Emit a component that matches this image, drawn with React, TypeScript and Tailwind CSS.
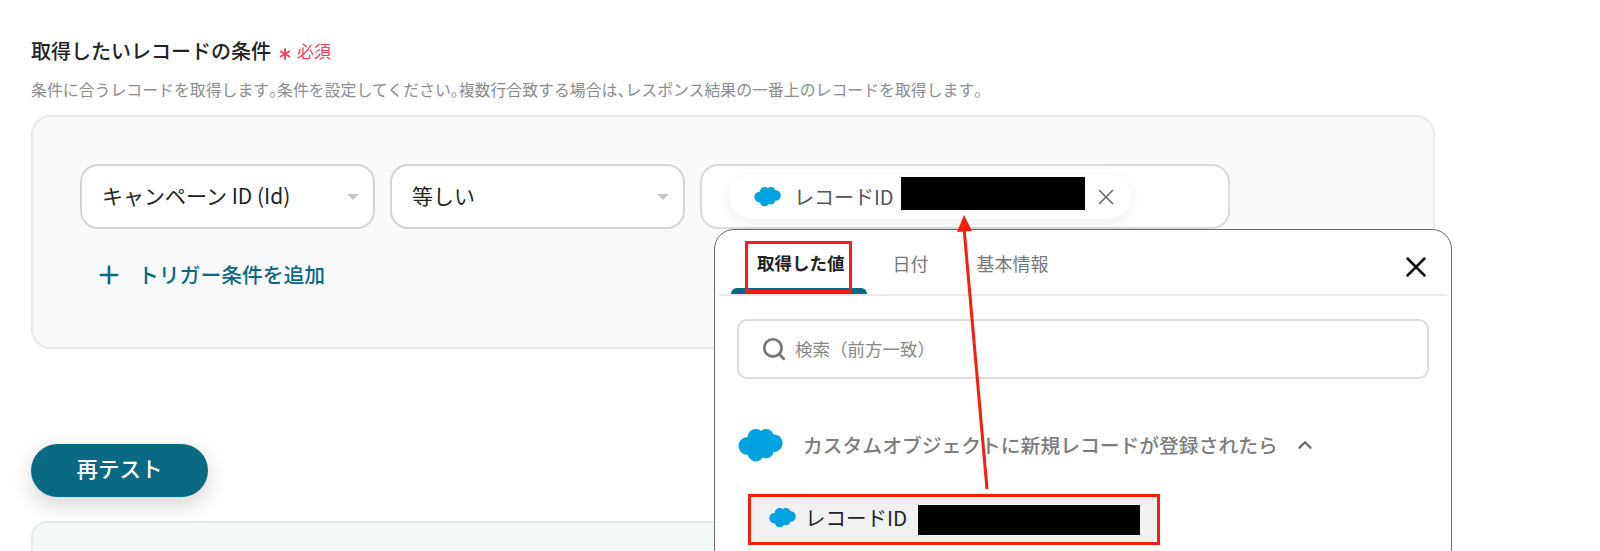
import React from "react";
import { Plus, X, Search, ChevronUp, Asterisk } from "lucide-react";

const jp = "font-['Noto_Sans_CJK_JP','Noto_Sans',sans-serif]";

function Cloud({ className }: { className?: string }) {
  return (
    <svg viewBox="0 0 48 36" className={className} fill="#00A1E0">
      <circle cx="19" cy="10" r="9" />
      <circle cx="30" cy="9" r="8" />
      <circle cx="38" cy="16" r="9.5" />
      <circle cx="10" cy="19" r="9.5" />
      <circle cx="19" cy="27" r="8.5" />
      <circle cx="30" cy="24" r="8" />
      <ellipse cx="24" cy="18" rx="12" ry="10" />
    </svg>
  );
}

function Select({ label }: { label: string }) {
  return (
    <div className="w-[295px] h-[65px] shrink-0 bg-white border-2 border-[#d2d4d6] rounded-[18px] flex items-center justify-between pl-[20px] pr-[14px]">
      <span className="text-[21px] text-[#222] mb-[2px]">{label}</span>
      <span className="w-0 h-0 border-x-[6px] border-x-transparent border-t-[6px] border-t-[#c4c6c8]" />
    </div>
  );
}

function P({ children }: { children: string }) {
  return <span className="tracking-[-0.5em]">{children}</span>;
}

export default function App() {
  return (
    <div className={`${jp} relative w-[1600px] h-[551px] overflow-hidden bg-white`}>
      <div className="pl-[31px] pt-[38px] w-[1435px]">
        <div className="flex items-center h-[26px]">
          <span className="text-[20px] font-medium text-[#222] leading-[26px]">取得したいレコードの条件</span>
          <Asterisk className="ml-[4px] mt-[5px] w-[20px] h-[20px] text-[#f4425f]" strokeWidth={2.25} />
          <span className="ml-[2px] text-[17px] text-[#f4425f] leading-[26px]">必須</span>
        </div>
        <p className="mt-[16px] h-[20px] leading-[20px] text-[15.88px] text-[#8a8d90] whitespace-nowrap">
          条件に合うレコードを取得します<P>。</P>条件を設定してください<P>。</P>複数行合致する場合は<P>、</P>レスポンス結果の一番上のレコードを取得します<P>。</P>
        </p>
        <div className="mt-[15px] h-[234px] bg-[#fafafa] border-2 border-[#e8eaec] rounded-[20px] pl-[47px] pt-[47px]">
          <div className="flex gap-[15px]">
            <Select label="キャンペーン ID (Id)" />
            <Select label="等しい" />
            <div className="w-[530px] h-[65px] bg-white border-2 border-[#d8dbe0] rounded-[18px] pl-[27px] flex items-center">
              <div className="w-[402px] h-[45px] bg-white rounded-full shadow-[0_4px_14px_rgba(0,0,0,0.07)] flex items-center pl-[25px]">
                <Cloud className="w-[27px] h-[21px]" />
                <span className="ml-[13px] text-[20px] text-[#555]">レコードID</span>
                <span className="ml-[7px] -mt-[6px] w-[184px] h-[33px] bg-black" />
                <X className="ml-[8px] w-[26px] h-[26px] text-[#666]" strokeWidth={1.5} />
              </div>
            </div>
          </div>
          <div className="mt-[30px] ml-[15px] flex items-center text-[#0a6a83]">
            <Plus className="w-[28px] h-[28px]" strokeWidth={2.25} />
            <span className="ml-[15px] text-[20.8px] font-medium">トリガー条件を追加</span>
          </div>
        </div>
        <button className="mt-[95px] block w-[177px] h-[53px] pb-[4px] rounded-full bg-[#0a6a83] text-white text-[21.5px] font-medium shadow-[0_8px_22px_rgba(0,0,0,0.17)]">
          再テスト
        </button>
        <div className="mt-[24px] h-[60px] bg-[#f4f9f9] border-2 border-[#e8eaea] rounded-[16px]" />
      </div>

      <div className="absolute left-[714px] top-[229px] w-[738px] h-[340px] bg-white border border-[#6b6b6b] rounded-[20px]">
        <div className="relative mx-[4px] h-[66px] border-b-2 border-[#e8e9ea] flex items-start">
          <div className="absolute left-[12px] bottom-0 w-[136px] h-[6px] rounded-t-[6px] bg-[#0a6a83]" />
          <span className="mt-[20px] ml-[38px] text-[17.5px] font-bold text-[#222] relative">取得した値</span>
          <span className="mt-[20px] ml-[48px] text-[18px] text-[#777]">日付</span>
          <span className="mt-[20px] ml-[48px] text-[18px] text-[#777]">基本情報</span>
          <X className="absolute right-[14px] top-[20px] w-[34px] h-[34px] text-[#111]" strokeWidth={1.75} />
        </div>
        <div className="mx-[22px] mt-[23px] h-[60px] border-2 border-[#dcdddf] rounded-[10px] flex items-center pl-[22px]">
          <Search className="w-[26px] h-[26px] text-[#777]" strokeWidth={2.5} />
          <span className="ml-[8px] text-[17.5px] text-[#888]">検索（前方一致）</span>
        </div>
        <div className="mt-[46px] ml-[23px] flex items-center h-[40px]">
          <Cloud className="w-[45px] h-[34px]" />
          <span className="ml-[20px] text-[19.8px] font-medium text-[#7c7c7c]">カスタムオブジェクトに新規レコードが登録されたら</span>
          <ChevronUp className="ml-[16px] w-[22px] h-[22px] text-[#666]" strokeWidth={2.5} />
        </div>
        <div className="mt-[28px] ml-[34px] w-[410px] h-[49px] bg-[#f1f1f2] rounded-[6px] flex items-center pl-[20px]">
          <Cloud className="w-[27px] h-[21px]" />
          <span className="ml-[9px] text-[20.5px] text-[#222]">レコードID</span>
          <span className="ml-[11px] mt-[4px] w-[222px] h-[30px] bg-black" />
        </div>
      </div>

      <div className="absolute left-[745px] top-[241px] w-[107px] h-[52px] border-[3px] border-[#f81e0c]" />
      <div className="absolute left-[748px] top-[494px] w-[412px] h-[51px] border-[3px] border-[#f81e0c]" />
      <svg className="absolute left-0 top-0 w-[1600px] h-[551px] pointer-events-none" viewBox="0 0 1600 551">
        <line x1="987" y1="489" x2="964" y2="228" stroke="#f81e0c" strokeWidth="3" />
        <polygon points="964,215 957,232 972,231" fill="#f81e0c" />
      </svg>
    </div>
  );
}
